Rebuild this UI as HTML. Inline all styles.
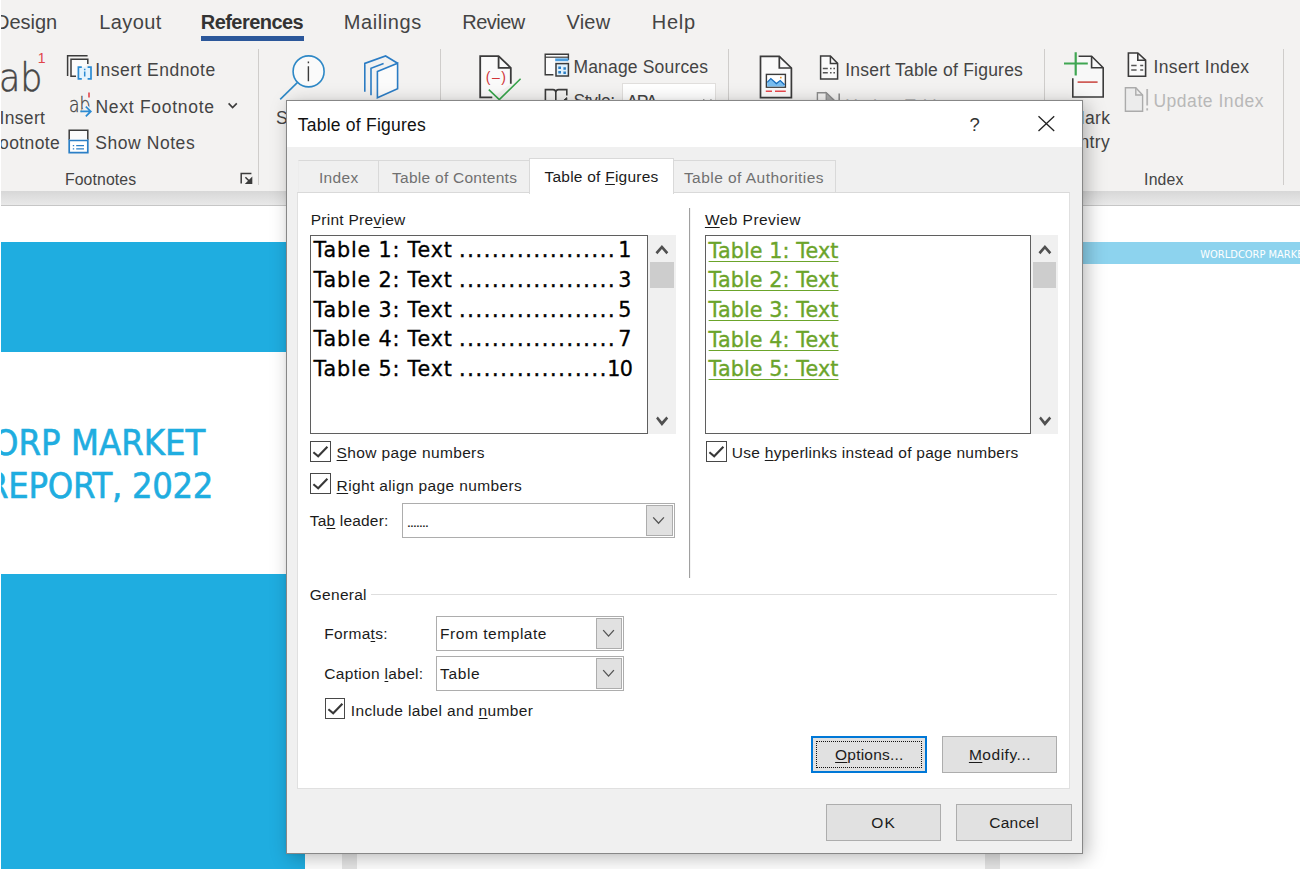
<!DOCTYPE html>
<html lang="en">
<head>
<meta charset="utf-8">
<title>Table of Figures</title>
<style>
html,body{margin:0;padding:0;}
body{width:1300px;height:869px;position:relative;overflow:hidden;background:#e6e6e6;font-family:"Liberation Sans",sans-serif;}
.a{position:absolute;}
.t{position:absolute;white-space:nowrap;line-height:1;}
.t u{text-decoration-thickness:1px;text-underline-offset:1.5px;}
.page{position:absolute;background:#fff;top:206px;height:663px;}
#ribbon{position:absolute;left:0;top:0;width:1300px;height:191px;background:#f3f2f1;}
#ribshadow{position:absolute;left:0;top:191px;width:1300px;height:14px;background:linear-gradient(#d7d7d7,#e9e9e9);border-bottom:1px solid #c6c6c6;}
.sep{position:absolute;width:1px;top:49px;height:136px;background:#cfcdcb;}
#dlg{position:absolute;left:286px;top:100px;width:795px;height:752px;border:1px solid #878787;background:#f0f0f0;box-shadow:4px 4px 18px rgba(0,0,0,.27),0 0 3px rgba(0,0,0,.06);}
#dlgtext,#ribtext{position:absolute;left:0;top:0;width:1300px;height:869px;overflow:hidden;}
.cb{position:absolute;width:18.6px;height:18.6px;border:1.3px solid #484848;background:#fff;}
.cb svg{position:absolute;left:0;top:0;}
.combo{position:absolute;border:1px solid #adadad;background:#fff;box-sizing:border-box;}
.combo .btn{position:absolute;border:1px solid #adadad;background:#e1e1e1;box-sizing:border-box;}
.pbtn{position:absolute;box-sizing:border-box;background:#e1e1e1;border:1px solid #adadad;}
.sb{position:absolute;background:#f0f0f0;}
.sb .th{position:absolute;left:1.5px;right:1.5px;background:#cdcdcd;}
.pv{position:absolute;box-sizing:border-box;border:1px solid #5f5f5f;background:#fff;}
</style>
</head>
<body>
<!-- document area -->
<div class="page" style="left:1px;width:341px;"></div>
<div class="page" style="left:357px;width:628px;"></div>
<div class="page" style="left:1000px;width:300px;"></div>
<div class="a" style="left:1px;top:242px;width:304px;height:110px;background:#1fade0;"></div>
<div class="a" style="left:1px;top:574px;width:304px;height:295px;background:#1fade0;"></div>
<div class="a" style="left:1000px;top:242px;width:300px;height:22px;background:#8dd3ee;"></div>

<!-- ribbon -->
<div id="ribbon"></div>
<div id="ribshadow"></div>
<div class="a" style="left:201px;top:36px;width:103px;height:5px;background:#2b579a;"></div>
<div class="sep" style="left:258px;"></div>
<div class="sep" style="left:440px;"></div>
<div class="sep" style="left:728px;"></div>
<div class="sep" style="left:1044px;"></div>
<div class="sep" style="left:1283px;"></div>
<div class="a" style="left:622px;top:83px;width:94px;height:30px;background:#fff;border:1px solid #e1dfdd;box-sizing:border-box;"></div>
<svg class="a" style="left:0;top:0;" width="1300" height="191" viewBox="0 0 1300 191" fill="none" stroke-linecap="butt">
<g stroke="#3b3b3b" stroke-width="1.5">
<!-- insert endnote -->
<path d="M67.6 76 V55.8 H87.6"/>
<path d="M76 76.2 H71 V59.2 H87.8 V64" fill="#fbfbfb"/>
<rect x="79" y="67" width="11.5" height="12" fill="#e4f3fd" stroke="none"/>
<path d="M81.8 67.2 H78.4 V78.8 H81.8 M87.6 67.2 H91 V78.8 H87.6" stroke="#2b8bd3" stroke-width="1.7"/>
<path d="M84.7 71.6 V76.6 M84.7 68.8 V70.3" stroke="#2b8bd3" stroke-width="1.5"/>
<!-- next footnote arrow -->
<path d="M89 92.4 V97.6" stroke="#e0444a" stroke-width="1.6"/>
<!-- show notes -->
<rect x="69.2" y="130.2" width="18.6" height="22.6" fill="#fbfbfb" stroke="none"/>
<path d="M69.2 140 V130.2 H87.8 V140"/>
<path d="M69.2 139.5 V152.7 H87.8 V139.5 M68.4 140.5 H88.6" stroke="#2b7fc6" stroke-width="1.7" fill="#fff"/>
<path d="M72.8 145.7 H74.2 M76.2 145.7 H84 M72.8 148.8 H74.2 M76.2 148.8 H84" stroke="#2b7fc6" stroke-width="1.2"/>
<!-- launcher -->
<path d="M241.2 183.4 V173.4 H251.4" stroke-width="1.5"/>
<path d="M245.4 177.2 L251.6 183.4" stroke-width="1.5"/>
<path d="M252.3 176.4 V184 H244.8 Z" fill="#3b3b3b" stroke="none"/>
<!-- search -->
<circle cx="308.6" cy="71.4" r="15.5" fill="#fafafa" stroke="#2e88c6" stroke-width="1.6"/>
<path d="M297.3 82.6 L280.2 99.4" stroke="#2e88c6" stroke-width="1.6"/>
<path d="M308.4 66.3 V81.3 M308.4 61.6 V63.2" stroke="#3b3b3b" stroke-width="1.4"/>
<!-- book -->
<path d="M364.8 91.8 V63.4 L385.6 56 L397.6 63.3" stroke="#2b7cc4" stroke-width="1.6"/>
<path d="M371 95.2 V68.2 L383.6 63.4" stroke="#2b7cc4" stroke-width="1.6"/>
<path d="M377.4 71.6 L397.6 63.3 V88.8 L377.4 97.8 Z" fill="#fbfbfb" stroke="#2b7cc4" stroke-width="1.6"/>
<!-- citation doc -->
<path d="M492.3 97.3 H480.2 V56.2 H498.6 L510.8 67.8 V83.8" fill="#fafafa" stroke-width="1.8"/>
<path d="M498.6 56.2 V67.8 H510.8" stroke-width="1.8"/>
<path d="M488.8 89.6 L499.3 99.6 L520.6 78.8" stroke="#37a34a" stroke-width="1.6"/>
<!-- manage sources -->
<path d="M553.4 74.8 H545.2 V54.2 H568.4 V60" fill="#fbfbfb" stroke-width="1.4"/>
<path d="M545.2 57.2 H568.4" stroke-width="1.2"/>
<rect x="555.2" y="58.4" width="13.2" height="2.8" fill="#4d9fe0" stroke="none"/>
<rect x="556" y="63.6" width="12.4" height="12.4" fill="#e1f1fc" stroke-width="1.5"/>
<path d="M558.3 67.7 H561 M563.4 68.5 H565.9 M558.3 72.2 H561 M563.4 72.8 H565.9" stroke="#2b7fc6" stroke-width="2.4"/>
<!-- style book -->
<path d="M545.4 101 V89.6 H553 Q555.8 89.6 555.8 92.4 V101 M555.8 92.4 Q555.8 89.6 558.6 89.6 H566.8 V95.4" stroke-width="1.6"/>
<path d="M563.4 100.5 L566.8 97.6 V100.5 Z" fill="#3b3b3b" stroke-width="1"/>
<path d="M703.4 99.6 L707.4 103.4 L711.4 99.6" stroke-width="1.3"/>
<!-- caption doc -->
<path d="M760.5 56.3 H779.3 L791.4 68 V97.6 H760.5 Z" fill="#fafafa" stroke-width="1.7"/>
<path d="M779.3 56.3 V68 H791.4" stroke-width="1.7"/>
<rect x="766.4" y="74.4" width="19" height="12.8" fill="#fff" stroke-width="1.4"/>
<path d="M767.2 86.4 V82.4 L770.8 78.6 L776.4 83.6 L780.2 80.6 L784.6 84.8 V86.4 Z" fill="#78bdf0" stroke="none"/>
<path d="M767.2 82.4 L770.8 78.6 L776.4 83.6 L780.2 80.6 L784.6 84.8" stroke="#1a6fbd" stroke-width="1.3"/>
<rect x="780" y="76.8" width="1.6" height="1.6" fill="#e8912d" stroke="none"/>
<path d="M765.8 91.3 H772 M775 91.3 H785.8" stroke="#e8474c" stroke-width="1.5"/>
<!-- insert table of figures -->
<path d="M820.6 56 H830.4 L837.6 63.4 V79 H820.6 Z" fill="#fafafa" stroke-width="1.5"/>
<path d="M830.4 56 V63.4 H837.6" stroke-width="1.5"/>
<path d="M822.8 68.6 H827.8 M830 68.6 H831.6 M833.4 68.6 H835 M822.8 72.8 H827.8 M830 72.8 H831.6 M833.4 72.8 H835" stroke="#555" stroke-width="1.5"/>
<!-- update table (disabled) -->
<path d="M817.4 101 V92.8 H826.2 L834.8 101" stroke="#8c8c8c" stroke-width="1.4"/>
<path d="M826.2 92.8 V101 H834.8 Z" fill="#a8a8a8" stroke="#8c8c8c" stroke-width="1.2"/>
<path d="M839.2 93.6 V101" stroke="#8c8c8c" stroke-width="1.6"/>
<!-- mark entry -->
<path d="M1078.6 56.2 H1091.6 L1103.2 67.8 V97 H1072.8 V78.2" fill="#f8f8f8" stroke-width="1.6"/>
<path d="M1091.6 56.2 V67.8 H1103.2" stroke-width="1.6"/>
<path d="M1064 63.5 H1087.8 M1075.7 52.2 V75.6" stroke="#3fa652" stroke-width="2.2"/>
<path d="M1077.6 82.1 H1097.6" stroke="#c8413b" stroke-width="1.5"/>
<!-- insert index -->
<path d="M1128.4 53 H1137.8 L1145.6 60.2 V76.2 H1128.4 Z" fill="#fafafa" stroke-width="1.6"/>
<path d="M1137.8 53 V60.2 H1145.6" stroke-width="1.6"/>
<path d="M1131.2 65.6 H1136.6 M1140.2 65.6 H1143.2 M1131.2 70 H1136.6 M1140.2 70 H1143.2" stroke="#555" stroke-width="1.5"/>
<!-- update index (disabled) -->
<path d="M1125.4 87.8 H1135.8 L1142.6 95 V111.2 H1125.4 Z" fill="#ececec" stroke="#ababab" stroke-width="1.4"/>
<path d="M1135.8 87.8 V95 H1142.6" stroke="#ababab" stroke-width="1.4"/>
<path d="M1147.2 89 V105.6 M1147.2 108.2 V110.4" stroke="#b5b5b5" stroke-width="1.8"/>
<!-- next footnote chevron -->
<path d="M228.6 103.4 L232.6 107.6 L236.8 103.4" stroke-width="1.6"/>
</g>

</svg>
<div id="ribtext">
<span class="t" id="t0" style="right:1242.8px;top:12.0px;font-size:20px;color:#444444;">Design</span>
<span class="t" id="t1" style="left:99.3px;top:12.0px;font-size:20px;color:#444444;letter-spacing:0.37px;">Layout</span>
<span class="t" id="t2" style="left:200.8px;top:12.0px;font-size:20px;color:#333;font-weight:700;letter-spacing:-0.55px;">References</span>
<span class="t" id="t3" style="left:343.8px;top:12.0px;font-size:20px;color:#444444;letter-spacing:0.58px;">Mailings</span>
<span class="t" id="t4" style="left:462.3px;top:12.0px;font-size:20px;color:#444444;letter-spacing:-0.54px;">Review</span>
<span class="t" id="t5" style="left:566.4px;top:12.0px;font-size:20px;color:#444444;letter-spacing:0.27px;">View</span>
<span class="t" id="t6" style="left:651.8px;top:12.0px;font-size:20px;color:#444444;letter-spacing:0.75px;">Help</span>
<span class="t" id="t7" style="left:-0.7px;top:58.0px;font-size:39.5px;color:#444;font-family:'DejaVu Sans Light', 'DejaVu Sans', 'Liberation Sans', sans-serif;transform:scaleX(0.882);transform-origin:0 0;-webkit-text-stroke:0.5px #4a4a4a;">ab</span>
<span class="t" id="t8" style="left:37.8px;top:51.0px;font-size:14px;color:#e0444a;">1</span>
<span class="t" id="t9" style="left:68.5px;top:94.0px;font-size:22px;color:#444;font-family:'DejaVu Sans Light', 'DejaVu Sans', 'Liberation Sans', sans-serif;transform:scaleX(0.780);transform-origin:0 0;-webkit-text-stroke:0.35px #4a4a4a;">ab</span>
<span class="t" id="t10" style="left:-0.5px;top:110.0px;font-size:17.5px;color:#444444;letter-spacing:0.34px;">Insert</span>
<span class="t" id="t11" style="right:1239.8px;top:135.0px;font-size:17.5px;color:#444444;letter-spacing:0.40px;">Footnote</span>
<span class="t" id="t12" style="left:95.2px;top:62.0px;font-size:17.5px;color:#444444;letter-spacing:0.47px;">Insert Endnote</span>
<span class="t" id="t13" style="left:95.5px;top:99.0px;font-size:17.5px;color:#444444;letter-spacing:0.71px;">Next Footnote</span>
<span class="t" id="t14" style="left:95.2px;top:135.0px;font-size:17.5px;color:#444444;letter-spacing:0.57px;">Show Notes</span>
<span class="t" id="t15" style="left:64.9px;top:172.0px;font-size:15.8px;color:#444444;letter-spacing:0.12px;">Footnotes</span>
<span class="t" id="t16" style="left:275.9px;top:110.0px;font-size:17.5px;color:#444444;">S</span>
<span class="t" id="t17" style="left:573.4px;top:59.0px;font-size:17.5px;color:#444444;letter-spacing:0.18px;">Manage Sources</span>
<span class="t" id="t18" style="left:573.4px;top:93.0px;font-size:17.5px;color:#444444;letter-spacing:-0.42px;">Style:</span>
<span class="t" id="t19" style="left:626.5px;top:94.0px;font-size:17.5px;color:#444444;letter-spacing:-1.31px;">APA</span>
<span class="t" id="t20" style="left:845.2px;top:62.0px;font-size:17.5px;color:#444444;letter-spacing:0.22px;">Insert Table of Figures</span>
<span class="t" id="t21" style="left:845.2px;top:98.0px;font-size:17.5px;color:#b8b8b8;letter-spacing:-0.18px;">Update Table</span>
<span class="t" id="t22" style="right:189.5px;top:110.0px;font-size:17.5px;color:#444444;letter-spacing:0.40px;">Mark</span>
<span class="t" id="t23" style="right:189.8px;top:134.0px;font-size:17.5px;color:#444444;letter-spacing:0.40px;">Entry</span>
<span class="t" id="t24" style="left:1153.4px;top:59.0px;font-size:17.5px;color:#444444;letter-spacing:0.39px;">Insert Index</span>
<span class="t" id="t25" style="left:1153.4px;top:93.0px;font-size:17.5px;color:#b8b8b8;letter-spacing:0.54px;">Update Index</span>
<span class="t" id="t26" style="left:1144.1px;top:172.0px;font-size:15.8px;color:#444444;letter-spacing:0.16px;">Index</span>
<span class="t" id="t27" style="left:485.7px;top:70.0px;font-size:14px;color:#d13438;letter-spacing:1.53px;">(–)</span>
<span class="t" id="t28" style="right:1094.6px;top:425.0px;font-size:36px;color:#1fade0;font-family:'DejaVu Sans Condensed', 'DejaVu Sans', 'Liberation Sans', sans-serif;letter-spacing:0.05px;-webkit-text-stroke:0.6px #1fade0;">WORLDCORP MARKET</span>
<span class="t" id="t29" style="right:1086.9px;top:468.0px;font-size:36px;color:#1fade0;font-family:'DejaVu Sans Condensed', 'DejaVu Sans', 'Liberation Sans', sans-serif;letter-spacing:-0.30px;-webkit-text-stroke:0.6px #1fade0;">RESEARCH REPORT, 2022</span>
<span class="t" id="t30" style="left:1200.3px;top:249.0px;font-size:11px;color:#ffffff;font-family:'DejaVu Sans Condensed', 'DejaVu Sans', 'Liberation Sans', sans-serif;">WORLDCORP MARKET RESEARCH</span>
</div>
<svg class="a" style="left:76px;top:102px;" width="20" height="20" viewBox="76 102 20 20" fill="none"><path d="M81.5 111.4 H90.8 M85.8 106.6 L90.8 111.4 L85.8 116.3" stroke="#f3f2f1" stroke-width="4.2"/><path d="M80.3 111.4 H90.8 M85.8 106.6 L90.8 111.4 L85.8 116.3" stroke="#2b8bd3" stroke-width="1.7"/></svg>
<div class="a" style="left:0;top:0;width:1px;height:869px;background:#fff;"></div>

<!-- dialog -->
<div id="dlg"></div>
<div class="a" style="left:287px;top:101px;width:795px;height:46px;background:#fff;"></div>
<svg class="a" style="left:1036px;top:114px;" width="20" height="20" viewBox="0 0 20 20"><path d="M2.5 2.2 L18.2 17 M18.2 2.2 L2.5 17" stroke="#222" stroke-width="1.3" fill="none"/></svg>
<!-- tabs -->
<div class="a" style="left:298px;top:160px;width:538px;height:32px;border:1px solid #d9d9d9;border-bottom:none;border-left-color:#ececec;box-sizing:border-box;background:#f0f0f0;"></div>
<div class="a" style="left:378px;top:160px;width:1px;height:32px;background:#d9d9d9;"></div>
<!-- panel -->
<div class="a" style="left:297px;top:192px;width:773px;height:597px;border:1px solid #e0e0e0;border-top-color:#d9d9d9;box-sizing:border-box;background:#fff;"></div>
<div class="a" style="left:529px;top:158px;width:145px;height:36px;border:1px solid #d9d9d9;border-bottom:none;box-sizing:border-box;background:#fff;"></div>
<!-- previews -->
<div class="pv" style="left:310px;top:235px;width:338px;height:199px;"></div>
<div class="sb" style="left:648px;top:235px;width:27.5px;height:198.5px;"><div class="th" style="top:27px;height:26px;"></div>
<svg class="a" style="left:0;top:0" width="27" height="199" viewBox="0 0 27 199"><polygon points="13.9,9.9 20.3,17.2 18.4,19.3 13.9,14 9.4,19.3 7.5,17.2" fill="#505050"/><polygon points="8.1,183.5 9.8,181.6 13.9,186.5 18.4,181.6 20.2,183.5 13.9,190.9" fill="#505050"/></svg></div>
<div class="pv" style="left:705px;top:235px;width:326px;height:199px;"></div>
<div class="sb" style="left:1031.3px;top:235px;width:26.5px;height:198.5px;"><div class="th" style="top:27px;height:26px;"></div>
<svg class="a" style="left:0;top:0" width="27" height="199" viewBox="0 0 27 199"><polygon points="13.9,9.9 20.3,17.2 18.4,19.3 13.9,14 9.4,19.3 7.5,17.2" fill="#505050"/><polygon points="8.1,183.5 9.8,181.6 13.9,186.5 18.4,181.6 20.2,183.5 13.9,190.9" fill="#505050"/></svg></div>
<!-- divider -->
<div class="a" style="left:689px;top:208px;width:1px;height:370px;background:#a0a0a0;"></div>
<div class="a" style="left:690px;top:208px;width:1px;height:370px;background:#f4f4f4;"></div>
<div class="a" style="left:371px;top:594px;width:686px;height:1px;background:#dedede;"></div>
<!-- checkboxes -->
<div class="cb" style="left:310px;top:441px;"><svg width="18" height="18" viewBox="0 0 18 18"><path d="M2.4 10.2 L7.2 14.2 L16.4 4.8" stroke="#383838" stroke-width="2.1" fill="none"/></svg></div>
<div class="cb" style="left:310px;top:473px;"><svg width="18" height="18" viewBox="0 0 18 18"><path d="M2.4 10.2 L7.2 14.2 L16.4 4.8" stroke="#383838" stroke-width="2.1" fill="none"/></svg></div>
<div class="cb" style="left:706px;top:441px;"><svg width="18" height="18" viewBox="0 0 18 18"><path d="M2.4 10.2 L7.2 14.2 L16.4 4.8" stroke="#383838" stroke-width="2.1" fill="none"/></svg></div>
<div class="cb" style="left:324.6px;top:698px;"><svg width="18" height="18" viewBox="0 0 18 18"><path d="M2.4 10.2 L7.2 14.2 L16.4 4.8" stroke="#383838" stroke-width="2.1" fill="none"/></svg></div>
<!-- combos -->
<div class="combo" style="left:402px;top:503px;width:273px;height:35px;"><div class="btn" style="left:243px;top:1px;width:27px;height:31px;"></div><svg class="a" style="left:0;top:0" width="271" height="32" viewBox="0 0 271 32"><path d="M250.2 13.4 L255.55 19.2 L260.9 13.4" stroke="#555" stroke-width="1.35" fill="none"/></svg></div>
<div class="combo" style="left:436px;top:616px;width:188px;height:35px;"><div class="btn" style="left:159px;top:1px;width:26px;height:31px;"></div><svg class="a" style="left:0;top:0" width="186" height="32" viewBox="0 0 186 32"><path d="M166.2 13.1 L171.55 19.1 L176.9 13.1" stroke="#555" stroke-width="1.35" fill="none"/></svg></div>
<div class="combo" style="left:436px;top:656px;width:188px;height:35px;"><div class="btn" style="left:159px;top:1px;width:26px;height:31px;"></div><svg class="a" style="left:0;top:0" width="186" height="32" viewBox="0 0 186 32"><path d="M166.2 13.1 L171.55 19.1 L176.9 13.1" stroke="#555" stroke-width="1.35" fill="none"/></svg></div>
<!-- buttons -->
<div class="pbtn" style="left:811px;top:736px;width:116px;height:37px;border:2px solid #0078d7;"><div class="a" style="left:3px;top:3px;right:3px;bottom:3px;border:1px dotted #111;"></div></div>
<div class="pbtn" style="left:942px;top:736px;width:115px;height:37px;"></div>
<div class="pbtn" style="left:826px;top:804px;width:115px;height:37px;"></div>
<div class="pbtn" style="left:956px;top:804px;width:116px;height:37px;"></div>
<div id="dlgtext">
<span class="t" id="t31" style="left:297.8px;top:117.0px;font-size:17.5px;color:#111;letter-spacing:0.23px;">Table of Figures</span>
<span class="t" id="t32" style="left:969.5px;top:116.0px;font-size:18.5px;color:#333;">?</span>
<span class="t" id="t33" style="left:319.0px;top:170.0px;font-size:15.5px;color:#707070;letter-spacing:0.31px;">Index</span>
<span class="t" id="t34" style="left:392.1px;top:170.0px;font-size:15.5px;color:#707070;letter-spacing:0.26px;">Table of Contents</span>
<span class="t" id="t35" style="left:544.5px;top:169.0px;font-size:15.5px;color:#1b1b1b;letter-spacing:0.23px;">Table of <u>F</u>igures</span>
<span class="t" id="t36" style="left:683.9px;top:170.0px;font-size:15.5px;color:#707070;letter-spacing:0.46px;">Table of Authorities</span>
<span class="t" id="t37" style="left:310.7px;top:212.0px;font-size:15.5px;color:#1b1b1b;letter-spacing:0.27px;">Print Pre<u>v</u>iew</span>
<span class="t" id="t38" style="left:704.9px;top:212.0px;font-size:15.5px;color:#1b1b1b;letter-spacing:0.45px;"><u>W</u>eb Preview</span>
<span class="t" id="t39" style="left:313.6px;top:240.0px;font-size:20.7px;color:#000;font-family:'DejaVu Sans', 'Liberation Sans', sans-serif;letter-spacing:0.80px;-webkit-text-stroke:0.3px #000;">Table 1: Text</span>
<span class="t" id="t40" style="left:458.9px;top:240.0px;font-size:20.7px;color:#000;font-family:'DejaVu Sans', 'Liberation Sans', sans-serif;letter-spacing:1.71px;-webkit-text-stroke:0.45px #000;">...................</span>
<span class="t" id="t41" style="right:668.5px;top:240.0px;font-size:20.7px;color:#000;font-family:'DejaVu Sans', 'Liberation Sans', sans-serif;-webkit-text-stroke:0.3px #000;">1</span>
<span class="t" id="t42" style="left:708.6px;top:241.0px;font-size:20.7px;color:#6ba42a;font-family:'DejaVu Sans', 'Liberation Sans', sans-serif;letter-spacing:0.10px;-webkit-text-stroke:0.35px #6ba42a;"><u style="text-underline-offset:2.5px;text-decoration-thickness:1.3px">Table 1: Text</u></span>
<span class="t" id="t43" style="left:313.6px;top:270.0px;font-size:20.7px;color:#000;font-family:'DejaVu Sans', 'Liberation Sans', sans-serif;letter-spacing:0.80px;-webkit-text-stroke:0.3px #000;">Table 2: Text</span>
<span class="t" id="t44" style="left:458.9px;top:270.0px;font-size:20.7px;color:#000;font-family:'DejaVu Sans', 'Liberation Sans', sans-serif;letter-spacing:1.71px;-webkit-text-stroke:0.45px #000;">...................</span>
<span class="t" id="t45" style="right:668.5px;top:270.0px;font-size:20.7px;color:#000;font-family:'DejaVu Sans', 'Liberation Sans', sans-serif;-webkit-text-stroke:0.3px #000;">3</span>
<span class="t" id="t46" style="left:708.6px;top:270.0px;font-size:20.7px;color:#6ba42a;font-family:'DejaVu Sans', 'Liberation Sans', sans-serif;letter-spacing:0.10px;-webkit-text-stroke:0.35px #6ba42a;"><u style="text-underline-offset:2.5px;text-decoration-thickness:1.3px">Table 2: Text</u></span>
<span class="t" id="t47" style="left:313.6px;top:300.0px;font-size:20.7px;color:#000;font-family:'DejaVu Sans', 'Liberation Sans', sans-serif;letter-spacing:0.80px;-webkit-text-stroke:0.3px #000;">Table 3: Text</span>
<span class="t" id="t48" style="left:458.9px;top:300.0px;font-size:20.7px;color:#000;font-family:'DejaVu Sans', 'Liberation Sans', sans-serif;letter-spacing:1.71px;-webkit-text-stroke:0.45px #000;">...................</span>
<span class="t" id="t49" style="right:668.5px;top:300.0px;font-size:20.7px;color:#000;font-family:'DejaVu Sans', 'Liberation Sans', sans-serif;-webkit-text-stroke:0.3px #000;">5</span>
<span class="t" id="t50" style="left:708.6px;top:300.0px;font-size:20.7px;color:#6ba42a;font-family:'DejaVu Sans', 'Liberation Sans', sans-serif;letter-spacing:0.10px;-webkit-text-stroke:0.35px #6ba42a;"><u style="text-underline-offset:2.5px;text-decoration-thickness:1.3px">Table 3: Text</u></span>
<span class="t" id="t51" style="left:313.6px;top:329.0px;font-size:20.7px;color:#000;font-family:'DejaVu Sans', 'Liberation Sans', sans-serif;letter-spacing:0.80px;-webkit-text-stroke:0.3px #000;">Table 4: Text</span>
<span class="t" id="t52" style="left:458.9px;top:329.0px;font-size:20.7px;color:#000;font-family:'DejaVu Sans', 'Liberation Sans', sans-serif;letter-spacing:1.71px;-webkit-text-stroke:0.45px #000;">...................</span>
<span class="t" id="t53" style="right:668.5px;top:329.0px;font-size:20.7px;color:#000;font-family:'DejaVu Sans', 'Liberation Sans', sans-serif;-webkit-text-stroke:0.3px #000;">7</span>
<span class="t" id="t54" style="left:708.6px;top:330.0px;font-size:20.7px;color:#6ba42a;font-family:'DejaVu Sans', 'Liberation Sans', sans-serif;letter-spacing:0.10px;-webkit-text-stroke:0.35px #6ba42a;"><u style="text-underline-offset:2.5px;text-decoration-thickness:1.3px">Table 4: Text</u></span>
<span class="t" id="t55" style="left:313.6px;top:359.0px;font-size:20.7px;color:#000;font-family:'DejaVu Sans', 'Liberation Sans', sans-serif;letter-spacing:0.80px;-webkit-text-stroke:0.3px #000;">Table 5: Text</span>
<span class="t" id="t56" style="left:458.9px;top:359.0px;font-size:20.7px;color:#000;font-family:'DejaVu Sans', 'Liberation Sans', sans-serif;letter-spacing:1.71px;-webkit-text-stroke:0.45px #000;">..................</span>
<span class="t" id="t57" style="right:667.7px;top:359.0px;font-size:20.7px;color:#000;font-family:'DejaVu Sans', 'Liberation Sans', sans-serif;letter-spacing:-0.60px;-webkit-text-stroke:0.3px #000;">10</span>
<span class="t" id="t58" style="left:708.6px;top:359.0px;font-size:20.7px;color:#6ba42a;font-family:'DejaVu Sans', 'Liberation Sans', sans-serif;letter-spacing:0.10px;-webkit-text-stroke:0.35px #6ba42a;"><u style="text-underline-offset:2.5px;text-decoration-thickness:1.3px">Table 5: Text</u></span>
<span class="t" id="t59" style="left:336.6px;top:445.0px;font-size:15.5px;color:#1b1b1b;letter-spacing:0.35px;"><u>S</u>how page numbers</span>
<span class="t" id="t60" style="left:336.6px;top:478.0px;font-size:15.5px;color:#1b1b1b;letter-spacing:0.37px;"><u>R</u>ight align page numbers</span>
<span class="t" id="t61" style="left:309.8px;top:513.0px;font-size:15.5px;color:#1b1b1b;letter-spacing:0.18px;">Ta<u>b</u> leader:</span>
<span class="t" id="t62" style="left:406.7px;top:514.0px;font-size:15.5px;color:#1b1b1b;letter-spacing:-1.28px;">.......</span>
<span class="t" id="t63" style="left:731.8px;top:445.0px;font-size:15.5px;color:#1b1b1b;letter-spacing:0.27px;">Use <u>h</u>yperlinks instead of page numbers</span>
<span class="t" id="t64" style="left:309.8px;top:587.0px;font-size:15.5px;color:#1b1b1b;letter-spacing:0.27px;">General</span>
<span class="t" id="t65" style="left:324.3px;top:626.0px;font-size:15.5px;color:#1b1b1b;letter-spacing:0.30px;">Forma<u>t</u>s:</span>
<span class="t" id="t66" style="left:440.1px;top:626.0px;font-size:15.5px;color:#1b1b1b;letter-spacing:0.54px;">From template</span>
<span class="t" id="t67" style="left:324.3px;top:666.0px;font-size:15.5px;color:#1b1b1b;letter-spacing:0.31px;">Caption <u>l</u>abel:</span>
<span class="t" id="t68" style="left:440.1px;top:666.0px;font-size:15.5px;color:#1b1b1b;letter-spacing:0.62px;">Table</span>
<span class="t" id="t69" style="left:350.8px;top:703.0px;font-size:15.5px;color:#1b1b1b;letter-spacing:0.35px;">Include label and <u>n</u>umber</span>
<span class="t" id="t70" style="left:835.1px;top:747.0px;font-size:15.5px;color:#1b1b1b;letter-spacing:0.20px;"><u>O</u>ptions...</span>
<span class="t" id="t71" style="left:968.9px;top:747.0px;font-size:15.5px;color:#1b1b1b;letter-spacing:0.53px;"><u>M</u>odify...</span>
<span class="t" id="t72" style="left:871.3px;top:815.0px;font-size:15.5px;color:#1b1b1b;letter-spacing:1.15px;">OK</span>
<span class="t" id="t73" style="left:989.3px;top:815.0px;font-size:15.5px;color:#1b1b1b;letter-spacing:0.22px;">Cancel</span>
</div>
</body>
</html>
